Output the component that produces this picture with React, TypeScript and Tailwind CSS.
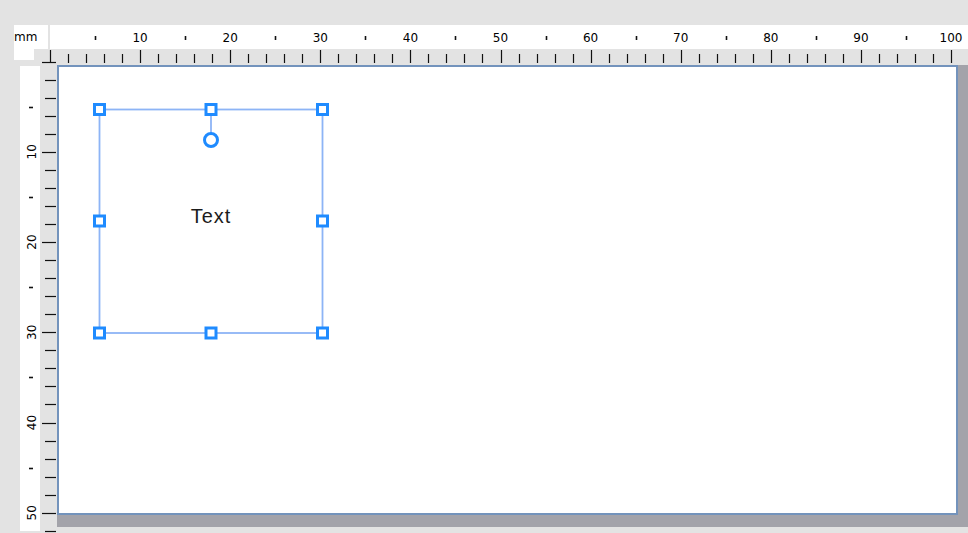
const MM_X = 9.01;
const MM_Y = 9.025;

const top0 = 2; // local x of 0 mm in the top ruler svg
const left0 = -3.5; // local y of 0 mm in the left ruler svg

const snap = (v: number) => Math.round(v) + 0.5;

function TopRuler() {
  const ticks = [];
  for (let mm = 0; mm <= 102; mm += 2) {
    const x = snap(top0 + mm * MM_X);
    const major = mm % 10 === 0;
    ticks.push(<line key={mm} x1={x} x2={x} y1={major ? 25 : 29} y2={38} stroke="#111" strokeWidth={1.2} />);
  }
  const labels = [];
  for (let mm = 10; mm <= 100; mm += 10) {
    labels.push(
      <text key={mm} x={top0 + mm * MM_X} y={17} textAnchor="middle" fontSize={12} fill="#000" fontFamily="'DejaVu Sans', sans-serif">
        {mm}
      </text>
    );
  }
  const dots = [];
  for (let mm = 5; mm <= 95; mm += 10) {
    const x = snap(top0 + mm * MM_X);
    dots.push(<line key={mm} x1={x} x2={x} y1={11} y2={15} stroke="#111" strokeWidth={1.6} />);
  }
  return (
    <svg width={920} height={40} className="block overflow-visible">
      <rect x={2} y={0} width={918} height={24} fill="#fff" />
      {dots}
      {labels}
      {ticks}
    </svg>
  );
}

function LeftRuler() {
  const ticks = [];
  for (let mm = 0; mm <= 52; mm += 2) {
    const y = snap(left0 + mm * MM_Y);
    const major = mm % 10 === 0;
    ticks.push(<line key={mm} x1={major ? 42 : 45} x2={56} y1={y} y2={y} stroke="#111" strokeWidth={1.2} />);
  }
  const labels = [];
  for (let mm = 10; mm <= 50; mm += 10) {
    const y = left0 + mm * MM_Y;
    labels.push(
      <text
        key={mm}
        x={0}
        y={0}
        transform={`translate(36 ${y}) rotate(-90)`}
        textAnchor="middle"
        fontSize={12}
        fill="#000"
        fontFamily="'DejaVu Sans', sans-serif"
      >
        {mm}
      </text>
    );
  }
  const dots = [];
  for (let mm = 5; mm <= 45; mm += 10) {
    const y = snap(left0 + mm * MM_Y);
    dots.push(<line key={mm} x1={29} x2={33} y1={y} y2={y} stroke="#111" strokeWidth={1.6} />);
  }
  return (
    <svg width={57} height={468} className="block overflow-visible shrink-0">
      <rect x={20} y={1} width={20} height={465} fill="#fff" />
      {dots}
      {labels}
      {ticks}
    </svg>
  );
}

const handles: [number, number][] = [
  [40.5, 42.5],
  [152, 42.5],
  [263.5, 42.5],
  [40.5, 154],
  [263.5, 154],
  [40.5, 266],
  [152, 266],
  [263.5, 266],
];

function Selection() {
  return (
    <svg width={897} height={446} className="absolute left-0 top-0">
      <rect x={40.5} y={42.5} width={223} height={223.5} fill="none" stroke="#8db4f6" strokeWidth={1.8} />
      <line x1={152} x2={152} y1={48} y2={67} stroke="#8db4f6" strokeWidth={1.8} />
      <circle cx={152} cy={73} r={6.5} fill="#fff" stroke="#1f8bff" strokeWidth={3} />
      {handles.map(([x, y], i) => (
        <rect key={i} x={x - 5} y={y - 5} width={10} height={10} fill="#fff" stroke="#1f8bff" strokeWidth={3} />
      ))}
    </svg>
  );
}

export default function App() {
  return (
    <div className="w-[968px] h-[533px] bg-[#e3e3e3] flex flex-col overflow-hidden">
      <div className="h-[25px] shrink-0" />
      <div className="h-[40px] shrink-0 flex">
        <div className="w-[48px] shrink-0 pl-[14px] flex flex-col">
          <div className="w-[34px] h-[24px] bg-white flex items-center text-[12px] text-black font-['DejaVu_Sans',sans-serif] leading-none">
            mm
          </div>
          <div className="w-[20px] h-[11px] bg-white" />
        </div>
        <TopRuler />
      </div>
      <div className="flex-1 flex">
        <LeftRuler />
        <div className="flex-1 flex flex-col">
          <div className="h-[462px] bg-[#a3a3aa]">
            <div className="relative w-[901px] h-[450px] bg-white border-2 border-[#7393bc]">
              <Selection />
              <div className="absolute left-[40px] top-[139px] w-[224px] text-center text-[20px] tracking-[1px] text-[#1c1c1c] font-['Liberation_Sans',Arial,sans-serif] leading-none">
                Text
              </div>
            </div>
          </div>
        </div>
      </div>
    </div>
  );
}
